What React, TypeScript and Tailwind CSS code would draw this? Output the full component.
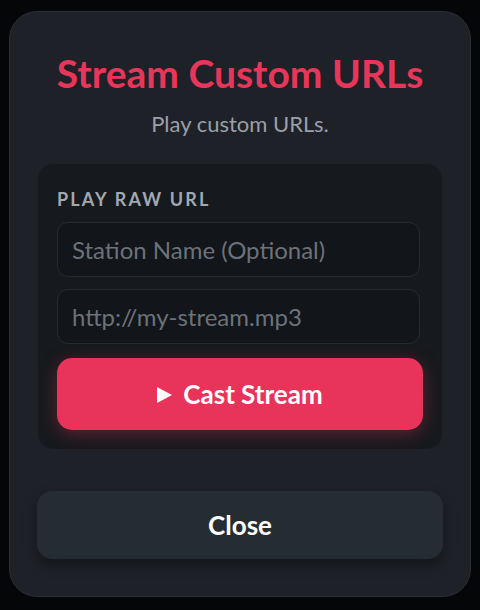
const font = { fontFamily: 'Lato, "Noto Sans", sans-serif' };

const StreamInput = ({ placeholder }: { placeholder: string }) => (
    <input
        type="text"
        placeholder={placeholder}
        className="mr-[3px] h-[55px] rounded-[11px] border border-[#272b31] bg-[#121519] px-[14px] text-[24px] text-gray-200 outline-none placeholder:text-[#6c727a]"
        style={font}
    />
);

const App = () => {
    return (
        <div className="flex min-h-[610px] w-full justify-center bg-[#050607] pt-[11px]" style={font}>
            <div className="flex h-[586px] w-[462px] flex-col rounded-[28px] border border-[#2b2f35] bg-[#1e2127] px-[27px] pt-[41px]">
                <h1 className="text-center text-[39px]/[40px] font-bold text-[#e8365a]">
                    Stream Custom URLs
                </h1>
                <p className="mt-[18px] text-center text-[22px]/[26px] text-[#9aa0a8]">
                    Play custom URLs.
                </p>
                <div className="mt-[26px] flex flex-col rounded-[16px] border border-[#1f2226] bg-[#16191d] px-[19px] pb-[19px] pt-[23px]">
                    <h2 className="text-[18px]/[24px] font-bold uppercase tracking-[0.12em] text-[#a3a8b0]">
                        Play raw URL
                    </h2>
                    <div className="mt-[11px] flex flex-col gap-[12px]">
                        <StreamInput placeholder="Station Name (Optional)" />
                        <StreamInput placeholder="http://my-stream.mp3" />
                    </div>
                    <button className="mt-[14px] flex h-[72px] items-center justify-center gap-[11px] rounded-[15px] bg-[#e8335a] text-[26px] font-bold text-white shadow-[0_4px_18px_rgba(232,51,90,0.35)]">
                        <svg width="15" height="16" viewBox="0 0 15 16" className="mt-[2px]">
                            <path d="M0 0L15 8L0 16Z" fill="white" />
                        </svg>
                        Cast Stream
                    </button>
                </div>
                <button className="mt-[41px] h-[68px] rounded-[15px] bg-[#252d32] text-[26px] font-bold text-white shadow-[0_6px_14px_rgba(0,0,0,0.35)]">
                    Close
                </button>
            </div>
        </div>
    );
};

export default App;
